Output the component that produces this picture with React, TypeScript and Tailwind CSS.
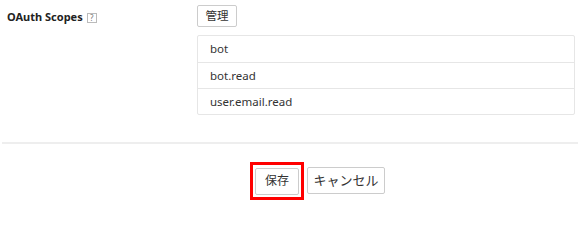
import React from "react";

export default function App() {
  const scopes = ["bot", "bot.read", "user.email.read"];
  return (
    <div
      className="w-[582px] h-[205px] bg-white text-[#333] overflow-hidden"
      style={{ fontFamily: '"Noto Sans", "Noto Sans CJK JP", sans-serif' }}
    >
      <div className="flex pt-[5px]">
        <div className="w-[197px] pl-[7px] pt-[5px] flex items-start">
          <span className="text-[11px] font-bold leading-[14px] text-[#222]">OAuth Scopes</span>
          <span className="ml-[4px] mt-[3px] w-[10px] h-[10px] border border-[#bbb] text-[8px] leading-[8px] text-[#777] flex items-center justify-center">
            ?
          </span>
        </div>
        <div className="w-[378px] flex flex-col items-start">
          <button className="w-[40px] h-[22px] border border-[#ccc] rounded-[2px] bg-white text-[11.5px] leading-[14px] text-[#333]">
            管理
          </button>
          <div className="mt-[8px] w-full border border-[#e6e6e6] rounded-[2px]">
            {scopes.map((s, i) => (
              <div
                key={s}
                className={`h-[26px] pl-[12px] flex items-center text-[11.5px] text-[#333] ${i > 0 ? "border-t border-[#e6e6e6]" : ""}`}
              >
                {s}
              </div>
            ))}
          </div>
        </div>
      </div>
      <div className="mt-[27px] mx-[2px] w-[576px] border-t-2 border-[#eeeeee]" />
      <div className="flex items-center pl-[250px] mt-[18px] gap-[3px]">
        <div className="border-[3px] border-[#ff0000] p-[2px]">
          <button className="w-[44px] h-[27px] border border-[#ccc] rounded-[2px] bg-white text-[12px] text-[#333]">
            保存
          </button>
        </div>
        <button className="w-[78px] h-[27px] border border-[#ccc] rounded-[2px] bg-white text-[13px] text-[#333]">
          キャンセル
        </button>
      </div>
    </div>
  );
}
